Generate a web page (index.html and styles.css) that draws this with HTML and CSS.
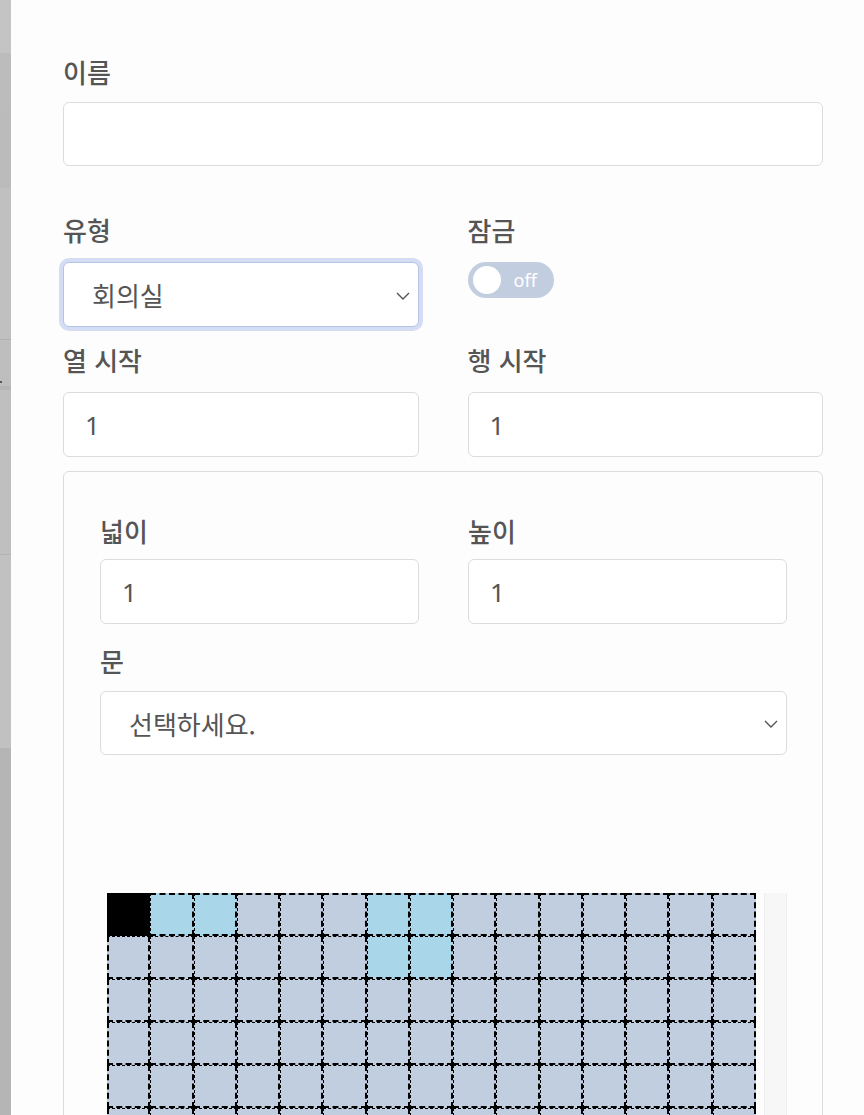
FILE: index.html
```html
<!DOCTYPE html>
<html lang="ko">
<head>
<meta charset="utf-8">
<title>공간 편집</title>
<link rel="stylesheet" href="styles.css">
</head>
<body>
<div class="page">
  <div class="backdrop">
    <div class="band b1"></div>
    <div class="band b2"></div>
    <div class="band b3"></div>
    <div class="band b4"></div>
    <div class="band b5"><span class="dot"></span></div>
    <div class="band b6"></div>
    <div class="band b7"></div>
    <div class="band b8"></div>
  </div>
  <div class="panel">
    <form class="form">
      <div class="field field-name">
        <label class="label">이름</label>
        <div class="input input-name"></div>
      </div>

      <div class="row row-type">
        <div class="col">
          <label class="label">유형</label>
          <div class="select select-focus">
            <span class="select-text">회의실</span>
            <svg class="chevron" width="14" height="8" viewBox="0 0 14 8"><path d="M1 1l6 6 6-6" fill="none" stroke="#555" stroke-width="1.4"/></svg>
          </div>
        </div>
        <div class="col">
          <label class="label">잠금</label>
          <div class="toggle">
            <span class="knob"></span>
            <span class="toggle-text">off</span>
          </div>
        </div>
      </div>

      <div class="row row-start">
        <div class="col">
          <label class="label">열 시작</label>
          <div class="input"><span class="value">1</span></div>
        </div>
        <div class="col">
          <label class="label">행 시작</label>
          <div class="input"><span class="value">1</span></div>
        </div>
      </div>

      <div class="box">
        <div class="row row-size">
          <div class="col">
            <label class="label">넓이</label>
            <div class="input"><span class="value">1</span></div>
          </div>
          <div class="col">
            <label class="label">높이</label>
            <div class="input"><span class="value">1</span></div>
          </div>
        </div>
        <div class="field field-door">
          <label class="label">문</label>
          <div class="select">
            <span class="select-text">선택하세요.</span>
            <svg class="chevron" width="14" height="8" viewBox="0 0 14 8"><path d="M1 1l6 6 6-6" fill="none" stroke="#555" stroke-width="1.4"/></svg>
          </div>
        </div>
        <div class="map">
          <div class="cells" id="cells"></div>
          <div class="track"></div>
        </div>
      </div>
    </form>
  </div>
</div>
<script src="script.js"></script>
</body>
</html>
```

FILE: script.js
```js
(function () {
  var cells = document.getElementById('cells');
  var cols = 15, rows = 8;
  var blue = { '0,1': 1, '0,2': 1, '0,6': 1, '0,7': 1, '1,6': 1, '1,7': 1 };
  for (var r = 0; r < rows; r++) {
    for (var c = 0; c < cols; c++) {
      var d = document.createElement('div');
      d.className = 'cell';
      if (r === 0 && c === 0) d.className += ' cell-black';
      else if (blue[r + ',' + c]) d.className += ' cell-blue';
      cells.appendChild(d);
    }
  }
})();
```

FILE: styles.css
```css
* { box-sizing: border-box; }
html, body {
  margin: 0;
  padding: 0;
  height: 1115px;
  overflow: hidden;
  background: #fdfdfd;
  font-family: "Noto Sans CJK KR", "Noto Sans", sans-serif;
}
.page {
  display: flex;
  height: 1115px;
}
.backdrop {
  width: 11px;
  flex: none;
  display: flex;
  flex-direction: column;
}
.band { flex: none; position: relative; }
.b1 { height: 53px; background: #c4c4c4; }
.b2 { height: 52px; background: #bcbcbc; }
.b3 { height: 83px; background: #bbbbbb; }
.b4 { height: 152px; background: #c0c0c0; border-bottom: 1px solid #b0b0b0; }
.b5 { height: 50px; background: #bebebe; border-bottom: 4px solid #b5b5b5; }
.b6 { height: 165px; background: #bfbfbf; border-bottom: 1px solid #b3b3b3; }
.b7 { height: 193px; background: #c1c1c1; }
.b8 { flex: 1; background: #b5b5b5; }
.dot {
  position: absolute;
  left: 0;
  top: 41px;
  width: 2px;
  height: 2px;
  background: #555;
}
.panel {
  flex: 1;
  background: #fdfdfd;
  padding: 54px 42px 0 52px;
}
.form { display: block; }
.label {
  display: block;
  font-size: 26px;
  line-height: 36px;
  font-weight: 500;
  color: #555;
}
.field-name .label { margin-bottom: 12px; }
.field-name { margin-bottom: 46px; }
.row {
  display: grid;
  grid-template-columns: 1fr 1fr;
  column-gap: 49px;
}
.row-type { margin-bottom: 15px; }
.row-type .label,
.row-start .label { margin-bottom: 14px; }
.row-start { margin-bottom: 14px; }
.input {
  height: 65px;
  background: #fff;
  border: 1px solid #dcdcdc;
  border-radius: 6px;
  display: flex;
  align-items: center;
  padding-left: 21px;
}
.input-name { height: 64px; }
.value {
  font-size: 26px;
  color: #555;
  font-family: "Noto Sans", sans-serif;
}
.select {
  height: 65px;
  background: #fff;
  border: 1px solid #dcdcdc;
  border-radius: 6px;
  display: flex;
  align-items: center;
  justify-content: space-between;
  padding: 0 8px 0 28px;
}
.select-focus {
  border-color: #b4c4e6;
  box-shadow: 0 0 0 4px #d4ddf3;
}
.select-text {
  font-size: 26px;
  color: #555;
}
.chevron { flex: none; margin-top: 2px; }
.toggle {
  width: 86px;
  height: 36px;
  border-radius: 18px;
  background: #c2cddf;
  display: flex;
  align-items: center;
  padding-left: 5px;
}
.knob {
  width: 28px;
  height: 28px;
  border-radius: 50%;
  background: #fff;
  flex: none;
}
.toggle-text {
  margin-left: 13px;
  font-family: "Noto Sans", sans-serif;
  font-size: 18px;
  color: #fff;
  line-height: 1;
  margin-top: -1px;
}
.box {
  border: 1px solid #dcdcdc;
  border-radius: 6px;
  padding: 41px 35px 0 36px;
  height: 800px;
}
.row-size .label { margin-bottom: 10px; }
.row-size { margin-bottom: 19px; }
.field-door .label { margin-bottom: 12px; }
.field-door .select { height: 64px; }
.field-door { margin-bottom: 138px; }
.map {
  display: flex;
  padding-left: 7px;
  gap: 8px;
}
.cells {
  width: 649px;
  flex: none;
  display: grid;
  grid-template-columns: repeat(15, 1fr);
  grid-auto-rows: 43px;
}
.cell {
  background: #c1cee0;
  border-style: dashed;
  border-color: #000;
  border-width: 1px 2px 2px 1px;
}
.cell:nth-child(-n+15) { border-top-width: 2px; }
.cell:nth-child(15n+1) { border-left-width: 2px; }
.cell-black { background: #000; }
.cell-blue { background: #a9d6e8; }
.track {
  width: 23px;
  flex: none;
  background: #f7f7f7;
  border-left: 1px solid #efefef;
  border-right: 1px solid #efefef;
  height: 400px;
}
```
